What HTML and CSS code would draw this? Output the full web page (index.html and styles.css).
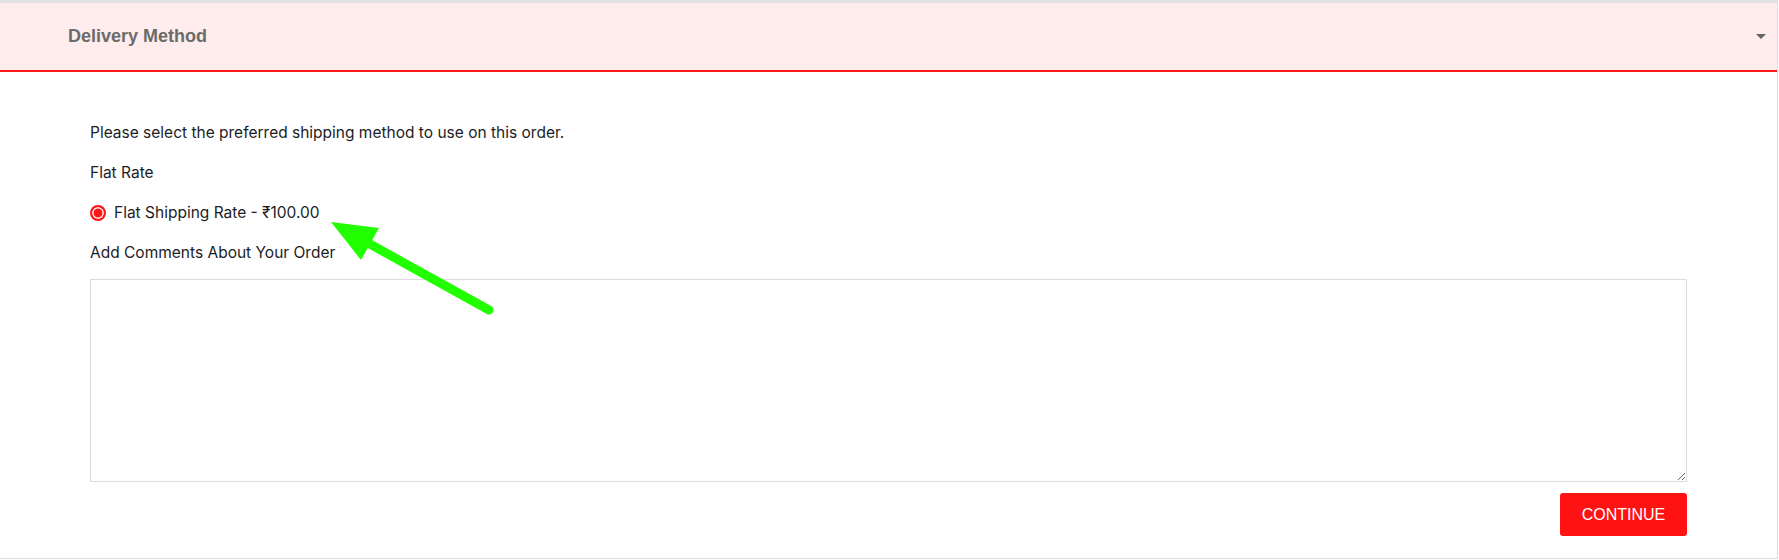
FILE: index.html
```html
<!DOCTYPE html>
<html lang="en">
<head>
  <meta charset="UTF-8" />
  <meta name="viewport" content="width=device-width, initial-scale=1" />
  <title>Delivery Method</title>
  <link rel="stylesheet" href="styles.css">
</head>
<body>
  <div class="panel">
    <div class="panel-heading">
      <h4 class="panel-title">Delivery Method</h4>
      <span class="caret"></span>
    </div>

    <div class="panel-body">
      <p class="line">Please select the preferred shipping method to use on this order.</p>
      <p class="line">Flat Rate</p>
      <label class="line radio">
        <input type="radio" name="shipping_method" value="flat.flat" checked />
        <span>Flat Shipping Rate - ₹100.00</span>
      </label>
      <p class="line comment-label">Add Comments About Your Order</p>
      <textarea name="comment" class="comment"></textarea>
      <div class="buttons">
        <button type="button" class="btn-continue">CONTINUE</button>
      </div>

      <!-- annotation arrow drawn over the page -->
      <svg class="arrow" width="180" height="110" viewBox="0 0 180 110">
        <line x1="169" y1="101" x2="48" y2="34" stroke="#22ff00" stroke-width="9" stroke-linecap="round" />
        <polygon points="11,13 59,19 41,51" fill="#22ff00" />
      </svg>
    </div>
  </div>
</body>
</html>
```

FILE: styles.css
```css
body {
  margin: 0;
  font-family: Inter, "Noto Sans", sans-serif;
  color: #1c1c24;
  background: #fff;
}
.panel {
  border-top: 3px solid #e2e2e2;
  border-right: 1px solid #dcdcdc;
  border-bottom: 1px solid #dcdcdc;
  margin-right: 1px;
}
.panel-heading {
  display: flex;
  align-items: center;
  justify-content: space-between;
  height: 67px;
  padding: 0 11px 0 68px;
  background-color: #ffeded;
  border-bottom: 2px solid #ff1616;
}
.panel-title {
  margin: 0;
  font-family: "Liberation Sans", Arial, sans-serif;
  font-size: 18px;
  font-weight: bold;
  color: #6b6b6b;
}
.caret {
  width: 0;
  height: 0;
  border-left: 5px solid transparent;
  border-right: 5px solid transparent;
  border-top: 5px solid #666;
  margin-top: -1px;
}
.panel-body {
  position: relative;
  padding: 51px 90px 22px 90px;
}
.line {
  margin: 0 0 20px 0;
  font-size: 15.5px;
  line-height: 20px;
}
.radio {
  display: flex;
  align-items: center;
  gap: 8px;
}
.radio input {
  appearance: none;
  width: 16px;
  height: 16px;
  margin: 0;
  border: 2.5px solid #ff1616;
  border-radius: 50%;
  background: #ff1616;
  box-shadow: inset 0 0 0 1.5px #fff;
}
.comment-label {
  margin-bottom: 16px;
}
.comment {
  display: block;
  box-sizing: border-box;
  width: 100%;
  height: 203px;
  margin: 0;
  border: 1px solid #dcdcdc;
  border-radius: 0;
}
.buttons {
  display: flex;
  justify-content: flex-end;
  margin-top: 11px;
}
.btn-continue {
  width: 127px;
  height: 43px;
  border: none;
  border-radius: 3px;
  background-color: #ff1212;
  color: #fff;
  font-family: "Liberation Sans", Arial, sans-serif;
  font-size: 16px;
  cursor: pointer;
}
.arrow {
  position: absolute;
  left: 320px;
  top: 137px;
}
```
